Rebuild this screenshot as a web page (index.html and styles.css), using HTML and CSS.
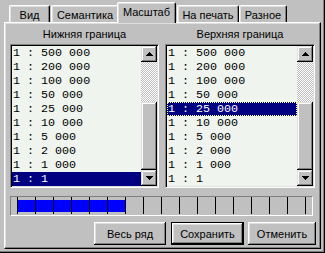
FILE: index.html
```html
<!DOCTYPE html>
<html>
<head>
<meta charset="utf-8">
<link rel="stylesheet" href="styles.css">
</head>
<body>
<div class="window">
  <div class="tabs">
    <div class="tab t1">Вид</div>
    <div class="tab t2">Семантика</div>
    <div class="tab t3 active">Масштаб</div>
    <div class="tab t4">На печать</div>
    <div class="tab t5">Разное</div>
  </div>
  <div class="panel">
    <div class="cols">
      <div class="col col-left">
        <div class="head">Нижняя граница</div>
        <div class="list">
          <ul class="items">
            <li>1 : 500 000</li>
            <li>1 : 200 000</li>
            <li>1 : 100 000</li>
            <li>1 : 50 000</li>
            <li>1 : 25 000</li>
            <li>1 : 10 000</li>
            <li>1 : 5 000</li>
            <li>1 : 2 000</li>
            <li>1 : 1 000</li>
            <li class="sel">1 : 1</li>
          </ul>
          <div class="sb">
            <div class="sbbtn"><svg width="7" height="4" viewBox="0 0 7 4"><path d="M3 0h1v1h1v1h1v1h1v1H0V3h1V2h1V1h1z"/></svg></div>
            <div class="track"></div>
            <div class="thumb"></div>
            <div class="sbbtn"><svg width="7" height="4" viewBox="0 0 7 4"><path d="M0 0h7v1H6v1H5v1H4v1H3V3H2V2H1V1H0z"/></svg></div>
          </div>
        </div>
      </div>
      <div class="col col-right">
        <div class="head">Верхняя граница</div>
        <div class="list">
          <ul class="items">
            <li>1 : 500 000</li>
            <li>1 : 200 000</li>
            <li>1 : 100 000</li>
            <li>1 : 50 000</li>
            <li class="sel focus">1 : 25 000</li>
            <li>1 : 10 000</li>
            <li>1 : 5 000</li>
            <li>1 : 2 000</li>
            <li>1 : 1 000</li>
            <li>1 : 1</li>
          </ul>
          <div class="sb">
            <div class="sbbtn"><svg width="7" height="4" viewBox="0 0 7 4"><path d="M3 0h1v1h1v1h1v1h1v1H0V3h1V2h1V1h1z"/></svg></div>
            <div class="track"></div>
            <div class="thumb"></div>
            <div class="sbbtn"><svg width="7" height="4" viewBox="0 0 7 4"><path d="M0 0h7v1H6v1H5v1H4v1H3V3H2V2H1V1H0z"/></svg></div>
          </div>
        </div>
      </div>
    </div>
    <div class="gauge">
      <div class="seg on"></div><div class="seg on"></div><div class="seg on"></div>
      <div class="seg on"></div><div class="seg on"></div><div class="seg on"></div>
      <div class="seg"></div><div class="seg"></div><div class="seg"></div>
      <div class="seg"></div><div class="seg"></div><div class="seg"></div>
      <div class="seg"></div><div class="seg"></div><div class="seg"></div>
      <div class="seg last"></div>
    </div>
    <div class="buttons">
      <div class="btn b1">Весь ряд</div>
      <div class="btn b2 default">Сохранить</div>
      <div class="btn b3">Отменить</div>
    </div>
  </div>
</div>
</body>
</html>
```

FILE: styles.css
```css
* { box-sizing: border-box; }
html, body { margin: 0; padding: 0; }
body {
  background: #c0c0c0;
  font-family: "Liberation Sans", Arial, sans-serif;
  font-size: 11px;
  color: #000;
}
.window {
  width: 325px;
  height: 253px;
  background: #c0c0c0;
  overflow: hidden;
  box-shadow: inset -1px -1px #000, inset -2px -2px #808080;
}
.tabs {
  display: flex;
  align-items: flex-end;
  height: 22px;
  padding-left: 9px;
}
.tab {
  position: relative;
  height: 17px;
  border-top: 1px solid #fff;
  border-left: 1px solid #fff;
  border-right: 1px solid #000;
  box-shadow: inset -1px 0 #808080, inset 1px 1px #dfdfdf;
  border-top-left-radius: 2px;
  border-top-right-radius: 2px;
  display: flex;
  justify-content: center;
  align-items: center;
  padding-top: 1px;
  white-space: nowrap;
}
.t1 { width: 41px; margin-right: 1px; }
.t2 { width: 68px; }
.t3 { width: 59px; margin-left: -2px; margin-right: 1px; }
.t4 { width: 62px; }
.t5 { width: 48px; }
.tab.active {
  height: 21px;
  margin-bottom: -1px;
  z-index: 2;
  background: #c0c0c0;
  padding-top: 0;
  padding-bottom: 3px;
}
.panel {
  margin-left: 4px;
  width: 317px;
  height: 227px;
  border-top: 1px solid #fff;
  border-left: 1px solid #fff;
  border-right: 1px solid #000;
  border-bottom: 1px solid #000;
  box-shadow: inset -1px -1px #808080, inset 1px 1px #dfdfdf;
  display: flex;
  flex-direction: column;
}
.cols {
  display: flex;
  padding-left: 5px;
  gap: 6px;
}
.col-left { width: 149px; }
.col-right { width: 150px; }
.head {
  height: 21px;
  display: flex;
  align-items: center;
  justify-content: center;
  white-space: nowrap;
}
.list {
  height: 144px;
  display: flex;
  background: #eff4ee;
  border-top: 1px solid #808080;
  border-left: 1px solid #808080;
  border-right: 1px solid #fff;
  border-bottom: 1px solid #fff;
  box-shadow: inset 1px 1px #000, inset -1px -1px #dfdfdf;
  padding: 1px;
}
.items {
  list-style: none;
  margin: 0;
  padding: 0;
  flex: 1;
  font-family: "Liberation Mono", "Courier New", monospace;
  font-size: 11.7px;
}
.items li {
  height: 14px;
  line-height: 14px;
  padding-left: 1px;
  white-space: pre;
}
.items li.sel {
  background: #000080;
  color: #fff;
}
.items li.focus {
  outline: 1px dotted #ffff80;
  outline-offset: -1px;
}
.sb {
  width: 16px;
  display: flex;
  flex-direction: column;
}
.sbbtn, .thumb {
  background: #c0c0c0;
  box-shadow: inset -1px -1px #000, inset 1px 1px #dfdfdf, inset -2px -2px #808080, inset 2px 2px #fff;
}
.sbbtn {
  height: 16px;
  display: flex;
  align-items: center;
  justify-content: center;
}
.sbbtn svg { display: block; shape-rendering: crispEdges; }
.track {
  height: 40px;
  background: repeating-conic-gradient(#fff 0 25%, #c0c0c0 0 50%) 0 0 / 2px 2px;
}
.thumb { height: 68px; }
.gauge {
  margin: 8px 0 0 5px;
  width: 303px;
  height: 20px;
  border-top: 1px solid #808080;
  border-left: 1px solid #808080;
  border-right: 1px solid #fff;
  border-bottom: 1px solid #fff;
  display: flex;
  align-items: flex-start;
  padding-left: 6px;
}
.seg {
  width: 18px;
  height: 17px;
  border-left: 1px solid #000;
}
.seg.last { width: 19px; border-right: 1px solid #000; }
.seg.on {
  background: linear-gradient(transparent 0 3px, #0000ff 3px 15px, transparent 15px);
}
.buttons {
  display: flex;
  justify-content: flex-end;
  padding-right: 4px;
  margin-top: 6px;
}
.btn {
  height: 23px;
  display: flex;
  align-items: center;
  justify-content: center;
  background: #c0c0c0;
  box-shadow: inset -1px -1px #000, inset 1px 1px #fff, inset -2px -2px #808080, inset 2px 2px #dfdfdf;
  white-space: nowrap;
}
.b1 { width: 72px; margin-right: 5px; }
.b2 { width: 73px; margin-right: 4px; }
.b3 { width: 68px; }
.btn.default {
  border: 1px solid #000;
}
```
